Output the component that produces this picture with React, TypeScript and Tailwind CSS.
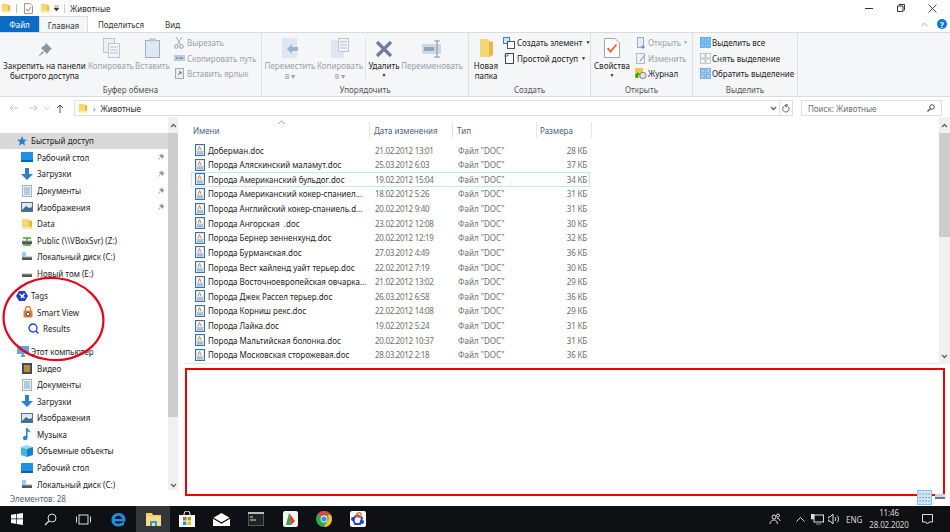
import type { ReactNode } from 'react'

const files = [
  ['Доберман.doc', '21.02.2012 13:01', '28 КБ'],
  ['Порода Аляскинский маламут.doc', '25.03.2012 6:03', '37 КБ'],
  ['Порода Американский бульдог.doc', '19.02.2012 15:04', '34 КБ'],
  ['Порода Американский кокер-спаниел...', '18.02.2012 5:26', '31 КБ'],
  ['Порода Английский кокер-спаниель.d...', '20.02.2012 9:40', '31 КБ'],
  ['Порода Ангорская  .doc', '23.02.2012 12:08', '30 КБ'],
  ['Порода Бернер зенненхунд.doc', '20.02.2012 12:19', '32 КБ'],
  ['Порода Бурманская.doc', '27.03.2012 4:49', '36 КБ'],
  ['Порода Вест хайленд уайт терьер.doc', '22.02.2012 7:19', '30 КБ'],
  ['Порода Восточноевропейская овчарка...', '21.02.2012 13:02', '29 КБ'],
  ['Порода Джек Рассел терьер.doc', '26.03.2012 6:58', '36 КБ'],
  ['Порода Корниш рекс.doc', '22.02.2012 14:08', '29 КБ'],
  ['Порода Лайка.doc', '19.02.2012 5:24', '31 КБ'],
  ['Порода Мальтийская болонка.doc', '20.02.2012 10:37', '31 КБ'],
  ['Порода Московская сторожевая.doc', '28.03.2012 2:18', '36 КБ'],
]

function Folder({ size = 12 }: { size?: number }) {
  return (
    <svg width={size} height={size} viewBox="0 0 12 12" className="shrink-0">
      <path d="M1 1h6l1 1v9H1z" fill="#f7d774" />
      <path d="M8 2l3 1v8l-3 0z" fill="#e8b93f" />
      <path d="M1 9h10v2H1z" fill="#fbe6a2" />
    </svg>
  )
}

function DocFile() {
  return (
    <svg width="10" height="12" viewBox="0 0 10 12" className="shrink-0">
      <rect x="0.5" y="0.5" width="9" height="11" fill="#dbe7f4" stroke="#3f6f9f" />
      <rect x="2" y="2" width="6" height="4" fill="#fff" />
      <path d="M3 6l1.5-3.5L6 6" fill="none" stroke="#e0782f" strokeWidth="1" />
      <path d="M2 8h6M2 9.8h6" stroke="#6f94bb" strokeWidth="0.8" />
    </svg>
  )
}

function Desktop() {
  return (
    <svg width="12" height="10" viewBox="0 0 12 10" className="shrink-0">
      <rect width="12" height="9" fill="#1e90e6" />
      <rect y="8" width="12" height="2" fill="#0a64ad" />
    </svg>
  )
}

function Download() {
  return (
    <svg width="12" height="12" viewBox="0 0 12 12" className="shrink-0">
      <path d="M4 0h4v6h4l-6 6-6-6h4z" fill="#2f7fd0" />
    </svg>
  )
}

function Docs() {
  return (
    <svg width="10" height="12" viewBox="0 0 10 12" className="shrink-0">
      <rect x="0.5" y="0.5" width="9" height="11" fill="#eef2f6" stroke="#9fb2c6" />
      <path d="M2 3h6M2 5h6M2 7h6M2 9h6" stroke="#5f8db8" strokeWidth="0.8" />
    </svg>
  )
}

function Pictures() {
  return (
    <svg width="12" height="10" viewBox="0 0 12 10" className="shrink-0">
      <rect x="0.5" y="0.5" width="11" height="9" fill="#dce8f3" stroke="#54708c" />
      <path d="M1 8l4-4 3 2 3-1v4H1z" fill="#3d6f9e" />
    </svg>
  )
}

function Drive({ kind }: { kind: 'net' | 'sys' | 'plain' }) {
  return (
    <svg width="12" height="11" viewBox="0 0 12 11" className="shrink-0">
      {kind === 'net' && <path d="M2 3h8M6 3v7M2 10h8" stroke="#35a635" strokeWidth="1.4" fill="none" />}
      {kind === 'sys' && <path d="M1 2h4M1 4h4M1 6h3" stroke="#29a3dd" strokeWidth="1" />}
      <rect x="1" y="6" width="10" height="3" fill="#555" />
      <rect x="1" y="5.5" width="10" height="1" fill="#aaa" />
    </svg>
  )
}

function Pin() {
  return (
    <svg width="8" height="8" viewBox="0 0 8 8" className="shrink-0">
      <path d="M4.5 0.5L7.5 3.5 6.5 4 5.5 6 2 2.5 4 1.5zM2.8 4.6L0.5 7.5 3.4 5.2z" fill="#9a9a9a" />
    </svg>
  )
}

function Chevron({ up }: { up?: boolean }) {
  return (
    <svg width="7" height="5" viewBox="0 0 7 5">
      <path d={up ? 'M1 4l2.5-2.5L6 4' : 'M1 1l2.5 2.5L6 1'} fill="none" stroke="#606060" strokeWidth="1.3" />
    </svg>
  )
}

function NavRow({ icon, label, pin }: { icon: ReactNode; label: string; pin?: boolean }) {
  return (
    <div className="flex h-[16.6px] shrink-0 items-center gap-[4px] pl-[21px] pr-[3px] text-[#222]">
      <span className="flex w-[12px] shrink-0 justify-center">{icon}</span>
      <span className="flex-1 truncate">{label}</span>
      {pin && <Pin />}
    </div>
  )
}

function Sidebar() {
  return (
    <div className="relative flex w-[178px] shrink-0 overflow-hidden">
      <div className="flex w-[168px] shrink-0 flex-col pt-[15.5px]">
        <div className="flex h-[16.6px] shrink-0 items-center gap-[2px] bg-[#d9d9d9] pl-[17px] text-[#222]">
          <svg width="10" height="10" viewBox="0 0 10 10" className="shrink-0">
            <path d="M5 0l1.4 3.4L10 3.7 7.2 6l.9 3.6L5 7.700 1.900 9.600 2.800 6 0 3.700l3.600-.3z" fill="#2b7cd3" />
          </svg>
          <span className="ml-[2px]">Быстрый доступ</span>
        </div>
        <NavRow icon={<Desktop />} label="Рабочий стол" pin />
        <NavRow icon={<Download />} label="Загрузки" pin />
        <NavRow icon={<Docs />} label="Документы" pin />
        <NavRow icon={<Pictures />} label="Изображения" pin />
        <NavRow icon={<Folder />} label="Data" />
        <NavRow icon={<Drive kind="net" />} label="Public (\\VBoxSvr) (Z:)" />
        <NavRow icon={<Drive kind="sys" />} label="Локальный диск (C:)" />
        <NavRow icon={<Drive kind="plain" />} label="Новый том (E:)" />

        <div className="mt-[5.5px] flex h-[16.6px] shrink-0 items-center gap-[3px] pl-[16px] text-[#222]">
          <svg width="12" height="12" viewBox="0 0 12 12" className="shrink-0">
            <path d="M3 1h6l3 5-3 5H3L0 6z" fill="#1f3fc4" />
            <path d="M3.5 4l5 4M8.5 3.5L5 8" stroke="#fff" strokeWidth="1.3" />
          </svg>
          <span>Tags</span>
        </div>
        <div className="flex h-[16.6px] shrink-0 items-center gap-[4px] pl-[23px] text-[#222]">
          <svg width="10" height="12" viewBox="0 0 10 12" className="shrink-0">
            <path d="M2.5 5V3a2.5 2.5 0 015 0v2" fill="none" stroke="#e8792b" strokeWidth="1.4" />
            <rect x="0.5" y="4.5" width="9" height="7" rx="1" fill="#e8792b" />
            <circle cx="5" cy="8" r="1.8" fill="#fff" stroke="#2745c9" />
          </svg>
          <span>Smart View</span>
        </div>
        <div className="flex h-[16.6px] shrink-0 items-center gap-[4px] pl-[28px] text-[#222]">
          <svg width="11" height="11" viewBox="0 0 11 11" className="shrink-0">
            <circle cx="5" cy="5" r="4" fill="none" stroke="#1f3fd4" strokeWidth="1.3" />
            <path d="M8 8l2.5 2.5" stroke="#1f3fd4" strokeWidth="1.4" />
          </svg>
          <span>Results</span>
        </div>

        <div className="mt-[6px] flex h-[16.6px] shrink-0 items-center gap-[2px] pl-[17px] text-[#222]">
          <svg width="12" height="11" viewBox="0 0 12 11" className="shrink-0">
            <rect width="12" height="8" fill="#58a9e6" />
            <path d="M4 10h4M6 8v2" stroke="#777" strokeWidth="1.4" />
          </svg>
          <span>Этот компьютер</span>
        </div>
        <NavRow
          label="Видео"
          icon={
            <svg width="10" height="11" viewBox="0 0 10 11">
              <rect width="10" height="11" fill="#3c4a63" />
              <rect x="2" y="2" width="6" height="7" fill="#c08a3a" />
            </svg>
          }
        />
        <NavRow icon={<Docs />} label="Документы" />
        <NavRow icon={<Download />} label="Загрузки" />
        <NavRow icon={<Pictures />} label="Изображения" />
        <NavRow
          label="Музыка"
          icon={
            <svg width="8" height="12" viewBox="0 0 8 12">
              <path d="M3 0h1.5c.3 2 3.500 2.500 3 5C7 4 5.500 3.500 4.500 3.500V9.500A2.300 2.300 0 110 9.500 2.300 2.300 0 013 8z" fill="#1c86e0" />
            </svg>
          }
        />
        <NavRow
          label="Объемные объекты"
          icon={
            <svg width="12" height="12" viewBox="0 0 12 12">
              <path d="M0 2l6-2 6 2-6 2z" fill="#8fdcf2" />
              <path d="M0 2l6 2v8l-6-2z" fill="#3fb7e4" />
              <path d="M12 2L6 4v8l6-2z" fill="#1581c4" />
            </svg>
          }
        />
        <NavRow icon={<Desktop />} label="Рабочий стол" />
        <NavRow icon={<Drive kind="sys" />} label="Локальный диск (C:)" />
      </div>
      <div className="flex w-[10px] shrink-0 flex-col bg-[#f0f0f0]">
        <div className="flex h-[16px] shrink-0 items-center justify-center">
          <Chevron up />
        </div>
        <div className="h-[284px] shrink-0 bg-[#cdcdcd]" />
        <div className="flex flex-1 items-end justify-center pb-[2px]">
          <Chevron />
        </div>
      </div>
    </div>
  )
}

function FileList() {
  return (
    <div className="flex min-w-0 flex-1 flex-col pl-[7px]">
      <div className="flex flex-1 flex-col">
        <div className="relative flex h-[25.7px] shrink-0 pb-[4.7px] pl-[1px] pt-[5px] text-[#4c607a]">
          <span className="absolute left-[92px] top-[3px]">
            <svg width="9" height="5" viewBox="0 0 9 5">
              <path d="M1 4l3.500-3L8 4" fill="none" stroke="#9aa3ad" strokeWidth="1" />
            </svg>
          </span>
          <div className="flex w-[184px] items-center border-r border-[#e5e5e5] pl-[7px]">Имени</div>
          <div className="flex w-[83px] items-center border-r border-[#e5e5e5] pl-[4px]">Дата изменения</div>
          <div className="flex w-[84px] items-center border-r border-[#e5e5e5] pl-[4px]">Тип</div>
          <div className="flex w-[55px] items-center border-r border-[#e5e5e5] pl-[3px]">Размера</div>
        </div>
        {files.map((f, i) => (
          <div
            key={f[0]}
            className={`ml-[6px] flex h-[14.64px] w-[399px] shrink-0 items-center border ${
              i === 2 ? 'border-[#c4e4fb]' : 'border-transparent'
            }`}
          >
            <span className="ml-[3px] flex w-[13px] shrink-0">
              <DocFile />
            </span>
            <span className="w-[167px] shrink-0 whitespace-pre text-[#1c1c1c]">{f[0]}</span>
            <span className="w-[83px] shrink-0 tracking-[-0.3px] text-[#6d6d6d]">{f[1]}</span>
            <span className="w-[79px] shrink-0 text-[#6d6d6d]">Файл "DOC"</span>
            <span className="flex-1 pr-[2px] text-right tracking-[-0.2px] text-[#6d6d6d]">{f[2]}</span>
          </div>
        ))}
      </div>
      <div className="mt-[1px] h-px shrink-0 bg-[#e3e3e3]" />
    </div>
  )
}

function BigBtn({ icon, lines, off, w, caret }: { icon: ReactNode; lines: string[]; off?: boolean; w: string; caret?: boolean }) {
  return (
    <div className={`flex shrink-0 flex-col items-center text-center leading-[10px] ${w} ${off ? 'text-[#9aa1a8]' : 'text-[#222]'}`}>
      <div className="flex h-[21px] items-end justify-center">{icon}</div>
      <div className="mt-[3px] whitespace-nowrap">{lines[0]}</div>
      {lines[1] && <div className="whitespace-nowrap">{lines[1]}</div>}
      {caret && <div className="text-[5px] leading-[9px]">▼</div>}
    </div>
  )
}

function SmallBtn({ icon, label, off, caret, gap = 'gap-[2px]' }: { icon: ReactNode; label: string; off?: boolean; caret?: boolean; gap?: string }) {
  return (
    <div className={`flex h-[15.5px] items-center whitespace-nowrap ${gap} ${off ? 'text-[#9aa1a8]' : 'text-[#222]'}`}>
      <span className="flex w-[12px] shrink-0 justify-center">{icon}</span>
      <span>{label}</span>
      {caret && <span className="ml-[1px] text-[5px]">▼</span>}
    </div>
  )
}

function Group({ w, label, children }: { w: string; label: string; children: ReactNode }) {
  return (
    <div className={`flex shrink-0 flex-col border-r border-[#dcdfe2] ${w}`}>
      <div className="flex min-h-0 flex-1 pt-[4px]">{children}</div>
      <div className="h-[13px] text-center leading-[13px] text-[#555]">{label}</div>
    </div>
  )
}

const GridIcon = ({ c1, c2 }: { c1: string; c2: string }) => (
  <svg width="11" height="11" viewBox="0 0 11 11">
    <rect x="0.5" y="0.5" width="4.5" height="4.5" fill={c1} stroke={c2} strokeWidth="0.7" />
    <rect x="6" y="0.5" width="4.5" height="4.5" fill={c1} stroke={c2} strokeWidth="0.7" />
    <rect x="0.5" y="6" width="4.5" height="4.5" fill={c1} stroke={c2} strokeWidth="0.7" />
    <rect x="6" y="6" width="4.5" height="4.5" fill={c1} stroke={c2} strokeWidth="0.7" />
  </svg>
)

function Ribbon() {
  return (
    <div className="flex h-[65px] shrink-0 border-y border-[#dadbdc] bg-[#f5f6f7]">
      <Group w="w-[262px]" label="Буфер обмена">
        <div className="flex w-[88px] pl-[1px]">
          <BigBtn
            w="w-[87px]"
            lines={['Закрепить на панели', 'быстрого доступа']}
            icon={
              <svg width="16" height="16" viewBox="0 0 16 16">
                <path d="M9 1l6 6-2 1-3 4-6-6 4-3zM5.500 9L1 15l6-4.500z" fill="#8a95a3" />
              </svg>
            }
          />
        </div>
        <BigBtn
          off
          w="w-[46px]"
          lines={['Копировать']}
          icon={
            <svg width="17" height="20" viewBox="0 0 17 20">
              <rect x="0.5" y="0.5" width="11" height="14" fill="#e9eef4" stroke="#b9c7d6" />
              <rect x="5.5" y="5.5" width="11" height="14" fill="#f3f6f9" stroke="#b9c7d6" />
              <path d="M7 9h8M7 12h8M7 15h8" stroke="#aebfd1" />
            </svg>
          }
        />
        <BigBtn
          off
          w="w-[37px]"
          lines={['Вставить']}
          icon={
            <svg width="15" height="20" viewBox="0 0 15 20">
              <rect x="0.5" y="2.5" width="14" height="17" fill="#dfe7f1" stroke="#9db0c6" />
              <rect x="4" y="0.5" width="7" height="3" fill="#b9c7d6" />
            </svg>
          }
        />
        <div className="-mt-[2px] ml-[2px] flex flex-col">
          <SmallBtn
            off
            label="Вырезать"
            icon={
              <svg width="10" height="12" viewBox="0 0 10 12">
                <path d="M2 0l5 8M8 0L3 8" stroke="#a5aeb8" />
                <circle cx="2.5" cy="9.5" r="1.8" fill="none" stroke="#8d98a5" />
                <circle cx="7.5" cy="9.5" r="1.8" fill="none" stroke="#8d98a5" />
              </svg>
            }
          />
          <SmallBtn
            off
            label="Скопировать путь"
            icon={
              <svg width="11" height="6" viewBox="0 0 11 6">
                <rect width="11" height="6" fill="#bccde0" />
                <path d="M2 3h2M5 3h4" stroke="#5c6f84" />
              </svg>
            }
          />
          <SmallBtn
            off
            label="Вставить ярлык"
            icon={
              <svg width="9" height="11" viewBox="0 0 9 11">
                <rect x="0.5" y="0.5" width="8" height="10" fill="#e7edf4" stroke="#9aacc0" />
                <path d="M3 7l3-3M4 4h2v2" stroke="#5c6f84" fill="none" />
              </svg>
            }
          />
        </div>
      </Group>

      <Group w="w-[207px]" label="Упорядочить">
        <BigBtn
          off
          w="w-[56px]"
          lines={['Переместить', 'в ▾']}
          icon={
            <svg width="16" height="20" viewBox="0 0 16 20">
              <rect width="15" height="20" fill="#dde6f1" />
              <path d="M16 9H10V6l-5 5 5 5v-3h6z" fill="#9eb4cc" />
            </svg>
          }
        />
        <BigBtn
          off
          w="w-[44px]"
          lines={['Копировать', 'в ▾']}
          icon={
            <svg width="18" height="20" viewBox="0 0 18 20">
              <rect y="2" width="13" height="18" fill="#dde6f1" />
              <rect x="7.5" y="0.5" width="10" height="13" fill="#f3f6f9" stroke="#b9c7d6" />
              <path d="M9 4h7M9 7h7M9 10h7" stroke="#aebfd1" />
            </svg>
          }
        />
        <div className="mx-[3px] mb-[2px] w-px bg-[#e1e3e6]" />
        <BigBtn
          w="w-[30px]"
          lines={['Удалить']}
          caret
          icon={
            <svg width="18" height="18" viewBox="0 0 18 18">
              <path d="M2 2l14 14M16 2L2 16" stroke="#6a7f9e" strokeWidth="3.2" />
            </svg>
          }
        />
        <BigBtn
          off
          w="w-[66px]"
          lines={['Переименовать']}
          icon={
            <svg width="20" height="18" viewBox="0 0 20 18">
              <rect y="4" width="19" height="10" fill="#cdd9e6" />
              <rect x="2" y="7" width="10" height="4" fill="#8fa3ba" />
              <path d="M15 0v18M12 1h6M12 17h6" stroke="#8f9dad" strokeWidth="1.2" />
            </svg>
          }
        />
      </Group>

      <Group w="w-[122px]" label="Создать">
        <BigBtn
          w="w-[34px]"
          lines={['Новая', 'папка']}
          icon={
            <svg width="13" height="19" viewBox="0 0 13 19">
              <path d="M0 0h8l1 1v17H0z" fill="#f6d675" />
              <path d="M9 2l4 1v13l-4 2z" fill="#e6b840" />
            </svg>
          }
        />
        <div className="-mt-[2px] flex flex-col">
          <SmallBtn
            caret
            label="Создать элемент"
            icon={
              <svg width="12" height="12" viewBox="0 0 12 12">
                <rect x="0.5" y="0.5" width="6" height="6" fill="#cfe3f7" stroke="#3b7fc4" />
                <rect x="4.5" y="4.5" width="7" height="7" fill="#fff" stroke="#555" />
              </svg>
            }
          />
          <SmallBtn
            caret
            label="Простой доступ"
            icon={
              <svg width="10" height="12" viewBox="0 0 10 12">
                <rect x="1.5" y="1.5" width="8" height="10" fill="#fff" stroke="#444" />
                <path d="M0 4h4V2" stroke="#2d7dd2" fill="none" />
              </svg>
            }
          />
        </div>
      </Group>

      <Group w="w-[102px]" label="Открыть">
        <BigBtn
          w="w-[42px]"
          lines={['Свойства']}
          caret
          icon={
            <svg width="16" height="20" viewBox="0 0 16 20">
              <path d="M.5.5H11L15.5 5V19.500H.5z" fill="#fff" stroke="#a5a5a5" />
              <path d="M3.500 10l3 3.500 6-7" fill="none" stroke="#e8632a" strokeWidth="1.8" />
            </svg>
          }
        />
        <div className="-mt-[2px] ml-[2px] flex flex-col">
          <SmallBtn
            off
            gap="gap-[1px]"
            caret
            label="Открыть"
            icon={
              <svg width="9" height="12" viewBox="0 0 9 12">
                <rect x="0.5" y="0.5" width="6" height="10" fill="#e7edf4" stroke="#9aacc0" />
                <path d="M6 8v4M4 10h4" stroke="#5f88b3" />
              </svg>
            }
          />
          <SmallBtn
            off
            gap="gap-[1px]"
            label="Изменить"
            icon={
              <svg width="10" height="11" viewBox="0 0 10 11">
                <rect x="0.5" y="0.5" width="8" height="10" fill="#eef2f6" stroke="#adbccb" />
                <path d="M4 8l5-6" stroke="#9ab3cc" strokeWidth="1.4" />
              </svg>
            }
          />
          <SmallBtn
            gap="gap-[1px]"
            label="Журнал"
            icon={
              <svg width="12" height="11" viewBox="0 0 12 11">
                <path d="M0 0h8v10H0z" fill="#f0c93e" />
                <circle cx="8" cy="7.5" r="3.2" fill="#dfe3e6" stroke="#7d8790" />
                <path d="M0 7l3-3 2 3H3v3H1z" fill="#26a336" />
              </svg>
            }
          />
        </div>
      </Group>

      <Group w="w-[105px]" label="Выделить">
        <div className="-mt-[2px] flex flex-col pl-[6px]">
          <SmallBtn gap="gap-[1px]" label="Выделить все" icon={<GridIcon c1="#7fc1f2" c2="#3d95dd" />} />
          <SmallBtn gap="gap-[1px]" label="Снять выделение" icon={<GridIcon c1="#f7f8f9" c2="#a9b0b8" />} />
          <SmallBtn gap="gap-[1px]" label="Обратить выделение" icon={<GridIcon c1="#9ccbf1" c2="#4d9be0" />} />
        </div>
      </Group>
    </div>
  )
}

function AddressBar() {
  return (
    <div className="flex h-[20px] shrink-0 items-center pt-[2px] text-[#1e1e1e]">
      <div className="flex w-[74px] shrink-0 items-center pl-[9px]">
        <svg width="9" height="8" viewBox="0 0 9 8">
          <path d="M9 4H1M4 1L1 4l3 3" fill="none" stroke="#c3c6ca" />
        </svg>
        <svg width="9" height="8" viewBox="0 0 9 8" className="ml-[11px]">
          <path d="M0 4h8M5 1l3 3-3 3" fill="none" stroke="#c3c6ca" />
        </svg>
        <svg width="5" height="3" viewBox="0 0 5 3" className="ml-[6px]">
          <path d="M0 0l2.500 2.500L5 0" fill="none" stroke="#c3c6ca" />
        </svg>
        <svg width="8" height="9" viewBox="0 0 8 9" className="ml-[7px]">
          <path d="M4 9V1M1 4l3-3 3 3" fill="none" stroke="#555" />
        </svg>
      </div>
      <div className="flex h-[16px] w-[719px] shrink-0 items-center border border-[#dedede] pl-[3px]">
        <Folder size={10} />
        <span className="ml-[5px] text-[#555]">›</span>
        <span className="ml-[5px] flex-1">Животные</span>
        <span className="mr-[2px]">
          <Chevron />
        </span>
        <span className="flex h-full w-[13px] items-center justify-center border-l border-[#dedede]">
          <svg width="8" height="9" viewBox="0 0 8 9">
            <path d="M6.500 3a3.200 3.200 0 11-2.500-1.400M4 0v3l2-1.500z" fill="none" stroke="#555" strokeWidth="0.9" />
          </svg>
        </span>
      </div>
      <div className="ml-[8px] flex h-[16px] w-[141px] shrink-0 items-center justify-between border border-[#dedede] px-[6px] text-[#6d6d6d]">
        <span>Поиск: Животные</span>
        <svg width="8" height="8" viewBox="0 0 8 8">
          <circle cx="5" cy="3" r="2.300" fill="none" stroke="#555" />
          <path d="M3.500 4.500L.5 7.500" stroke="#555" strokeWidth="1.2" />
        </svg>
      </div>
    </div>
  )
}

function TitleBar() {
  return (
    <div className="flex h-[16px] shrink-0 items-center pl-[1px] text-[#1e1e1e]">
      <Folder size={10} />
      <span className="ml-[5px] h-[9px] w-px bg-[#bbb]" />
      <svg width="9" height="11" viewBox="0 0 9 11" className="ml-[7px]">
        <path d="M.5.5H6L8.500 3V10.500H.5z" fill="#fff" stroke="#999" />
        <path d="M2 6l2 2 3-4" fill="none" stroke="#e8632a" />
      </svg>
      <span className="ml-[7px] flex">
        <Folder size={10} />
      </span>
      <svg width="5" height="6" viewBox="0 0 5 6" className="ml-[4px]">
        <path d="M0 1h5M0 3h5l-2.500 3z" fill="#333" stroke="#333" strokeWidth="0.5" />
      </svg>
      <span className="ml-[5px] h-[9px] w-px bg-[#ccc]" />
      <span className="ml-[5px]">Животные</span>
      <span className="ml-auto flex items-center">
        <span className="h-px w-[8px] bg-[#333]" />
        <svg width="8" height="8" viewBox="0 0 8 8" className="ml-[24px]">
          <path d="M2 1.500V.5H7.500V6H6.500M.5 2h5.500v5.500H.5z" fill="none" stroke="#333" />
        </svg>
        <svg width="9" height="9" viewBox="0 0 9 9" className="ml-[23px] mr-[13px]">
          <path d="M.5.5l8 8M8.500.5l-8 8" stroke="#333" strokeWidth="0.9" />
        </svg>
      </span>
    </div>
  )
}

function Tabs() {
  return (
    <div className="flex h-[16px] shrink-0 items-center text-[#333]">
      <div className="flex h-full w-[39px] items-center justify-center bg-[#0b6cc4] text-white">Файл</div>
      <div className="flex h-[17px] w-[49px] items-center justify-center self-start border-x border-t border-[#dadbdc] bg-[#f5f6f7]">Главная</div>
      <div className="ml-[10px]">Поделиться</div>
      <div className="ml-[21px]">Вид</div>
      <span className="ml-auto flex items-center">
        <svg width="7" height="5" viewBox="0 0 7 5">
          <path d="M.5 4L3.500 1l3 3" fill="none" stroke="#aaa" />
        </svg>
        <span className="ml-[9px] mr-[3px] flex h-[10px] w-[10px] items-center justify-center rounded-full bg-[#0a78d7] text-[8px] font-bold text-white">?</span>
      </span>
    </div>
  )
}

function Taskbar() {
  return (
    <div className="flex h-[26px] shrink-0 items-center bg-[#0f1013] text-[#d8d8d8]">
      <div className="flex w-[34px] justify-center">
        <svg width="12" height="12" viewBox="0 0 12 12">
          <path d="M0 1.700L5 1v4.500H0zM5.700.9L12 0v5.500H5.700zM0 6.200h5v4.600l-5-.7zM5.700 6.200H12V12l-6.300-.9z" fill="#fff" />
        </svg>
      </div>
      <div className="flex w-[33px] justify-center">
        <svg width="13" height="13" viewBox="0 0 13 13">
          <circle cx="8" cy="5" r="4" fill="none" stroke="#ddd" />
          <path d="M5 8l-4 4" stroke="#ddd" strokeWidth="1.2" />
        </svg>
      </div>
      <div className="flex w-[33px] justify-center">
        <svg width="15" height="11" viewBox="0 0 15 11">
          <rect x="3" y="1" width="9" height="9" fill="none" stroke="#ddd" />
          <path d="M0.5 2.500v6M14.500 2.500v6" stroke="#ddd" />
        </svg>
      </div>
      <div className="flex w-[36px] justify-center">
        <svg width="15" height="15" viewBox="0 0 15 15">
          <path d="M7.500 1C3 1 .5 4 .5 8c0 4 3 6.500 6.500 6.500 2.500 0 4.500-.8 6-2v-3c-2 1.500-4 2-5.500 2S4 11.500 3.800 9.500H14.500C15 4 12 1 7.500 1zM3.900 7c.3-2 1.700-3.300 3.500-3.300S10.800 5 11 7z" fill="#1b8fe6" />
        </svg>
      </div>
      <div className="flex h-full w-[34px] items-center justify-center bg-[#33363b]">
        <svg width="15" height="13" viewBox="0 0 15 13">
          <path d="M0 0h6l1 2h8v11H0z" fill="#f5cf6a" />
          <rect y="4" width="15" height="9" fill="#f8dc88" />
          <path d="M4 13V8h7v5H9v-3H6v3z" fill="#2d9be0" />
        </svg>
      </div>
      <div className="flex w-[34px] justify-center">
        <svg width="16" height="16" viewBox="0 0 16 16">
          <path d="M5 4V3a3 3 0 016 0v1" fill="none" stroke="#eee" />
          <rect y="4" width="16" height="12" fill="#fff" />
          <rect x="4" y="6" width="3.5" height="3.5" fill="#f25022" />
          <rect x="8.5" y="6" width="3.5" height="3.5" fill="#7fba00" />
          <rect x="4" y="10.5" width="3.5" height="3.500" fill="#00a4ef" />
          <rect x="8.5" y="10.5" width="3.5" height="3.500" fill="#ffb900" />
        </svg>
      </div>
      <div className="flex w-[35px] justify-center">
        <svg width="17" height="13" viewBox="0 0 17 13">
          <path d="M0 5L8.500 0 17 5v8H0z" fill="#fff" />
          <path d="M0 5l8.500 5L17 5" fill="none" stroke="#111" strokeWidth="1.2" />
        </svg>
      </div>
      <div className="flex w-[34px] justify-center">
        <svg width="16" height="14" viewBox="0 0 16 14">
          <rect width="16" height="14" fill="#222" stroke="#888" />
          <rect width="16" height="2" fill="#bbb" />
          <path d="M2 5h3M2 8h6" stroke="#ddd" />
        </svg>
      </div>
      <div className="flex w-[34px] justify-center">
        <svg width="15" height="16" viewBox="0 0 15 16">
          <rect width="15" height="16" rx="2" fill="#f3f3f3" />
          <path d="M3 14L6 2l2 12z" fill="#2ba84a" />
          <path d="M6 2l6 8-4 4z" fill="#e23b2e" />
        </svg>
      </div>
      <div className="flex w-[34px] justify-center">
        <svg width="16" height="16" viewBox="0 0 16 16">
          <circle cx="8" cy="8" r="8" fill="#34a853" />
          <path d="M8 0a8 8 0 016.900 4H8a4 4 0 00-3.500 2L2.300 2.400A8 8 0 018 0z" fill="#e8453c" />
          <path d="M14.900 4A8 8 0 018 16l3.500-6a4 4 0 00-.5-6z" fill="#fbc02d" />
          <circle cx="8" cy="8" r="3.400" fill="#fff" />
          <circle cx="8" cy="8" r="2.600" fill="#4285f4" />
        </svg>
      </div>
      <div className="flex w-[34px] justify-center">
        <svg width="16" height="16" viewBox="0 0 16 16">
          <rect width="16" height="16" rx="2" fill="#fff" />
          <path d="M3 8l4-4 5 3-2 6H5z" fill="none" stroke="#2343cf" strokeWidth="1.8" />
          <circle cx="3" cy="8" r="2" fill="#2343cf" />
          <circle cx="12" cy="11" r="2" fill="#2343cf" />
          <circle cx="9" cy="4" r="2.200" fill="none" stroke="#ee7a22" strokeWidth="1.4" />
        </svg>
      </div>

      <div className="ml-auto flex items-center">
        <svg width="12" height="12" viewBox="0 0 12 12">
          <circle cx="5" cy="4" r="2" fill="none" stroke="#ddd" />
          <circle cx="9" cy="2.500" r="1.500" fill="none" stroke="#ddd" />
          <path d="M1 11c0-2.500 2-4 4-4s3 1 3.500 4M8 5.500c2 0 3 1 3 2.500" fill="none" stroke="#ddd" />
        </svg>
        <svg width="9" height="5" viewBox="0 0 9 5" className="ml-[15px]">
          <path d="M.5 4.500l4-4 4 4" fill="none" stroke="#ddd" />
        </svg>
        <svg width="13" height="11" viewBox="0 0 13 11" className="ml-[6px]">
          <rect x="3" y="1" width="9.500" height="7" fill="none" stroke="#ddd" />
          <path d="M0 0h3v5H0zM5 10h5" fill="#ddd" stroke="#ddd" strokeWidth="0.6" />
        </svg>
        <svg width="12" height="10" viewBox="0 0 12 10" className="ml-[4px]">
          <path d="M0 3h2l3-3v10L2 7H0z" fill="none" stroke="#ddd" />
          <path d="M7 3c1 1 1 3 0 4M9 1.500c2 2 2 5 0 7" fill="none" stroke="#ddd" />
        </svg>
        <span className="ml-[6px] w-[20px]">ENG</span>
        <div className="ml-[1px] flex w-[44px] flex-col items-center leading-[12px] tracking-[-0.15px]">
          <span>11:46</span>
          <span>28.02.2020</span>
        </div>
        <svg width="11" height="11" viewBox="0 0 11 11" className="ml-[10.5px] mr-[17.5px]">
          <path d="M.5.5h10v7.500H7L5.500 10 4 8H.5z" fill="none" stroke="#ddd" />
        </svg>
      </div>
    </div>
  )
}

export default function App() {
  return (
    <div className="flex h-[532px] w-[950px] flex-col overflow-hidden bg-white font-['Noto_Sans',sans-serif] text-[8px] leading-[11px]">
      <TitleBar />
      <Tabs />
      <Ribbon />
      <AddressBar />
      <div className="relative flex min-h-0 flex-1">
        <Sidebar />
        <div className="flex min-w-0 flex-1 flex-col">
          <div className="flex h-[247px] shrink-0">
            <FileList />
            <div className="flex w-[11px] shrink-0 flex-col bg-[#f0f0f0]">
              <div className="flex h-[16px] shrink-0 items-center justify-center">
                <Chevron up />
              </div>
              <div className="h-[104px] shrink-0 bg-[#cdcdcd]" />
              <div className="flex flex-1 items-end justify-center pb-[5px]">
                <Chevron />
              </div>
            </div>
          </div>
          <div className="ml-[7px] mr-[5px] mt-[4px] h-[128px] shrink-0 border-2 border-[#f00000]" />
        </div>
        <svg width="110" height="95" viewBox="0 0 110 95" className="absolute left-0 top-[157px]">
          <ellipse cx="53.5" cy="45" rx="50" ry="41" transform="rotate(6 53.5 45)" fill="none" stroke="#e8001c" strokeWidth="2.2" />
        </svg>
      </div>
      <div className="relative flex h-[16px] shrink-0 items-center pl-[10px] text-[#4c607a]">
        Элементов: 28
        <div className="absolute right-[18px] top-0 flex h-[15px] w-[15px] items-center justify-center border border-[#7fc4ee] bg-[#cfe8f8]">
          <svg width="11" height="9" viewBox="0 0 11 9">
            <path d="M0 1h2M3 1h8M0 4.500h2M3 4.500h8M0 8h2M3 8h8" stroke="#8aa0b4" strokeDasharray="2 1" />
          </svg>
        </div>
        <div className="absolute right-[5px] top-[4px]">
          <svg width="10" height="5" viewBox="0 0 10 5">
            <rect width="10" height="5" fill="#c9d5e0" />
            <rect y="3" width="10" height="2" fill="#6b7785" />
          </svg>
        </div>
      </div>
      <Taskbar />
    </div>
  )
}
